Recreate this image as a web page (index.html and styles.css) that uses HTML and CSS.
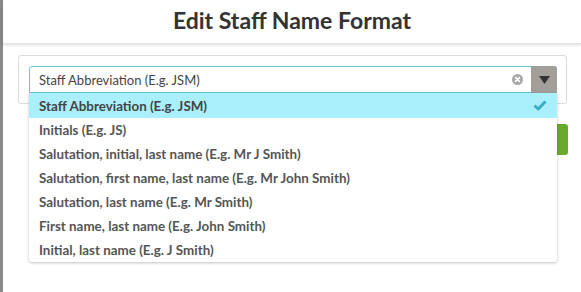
FILE: index.html
```html
<!DOCTYPE html>
<html lang="en">
<head>
  <meta charset="UTF-8" />
  <title>Edit Staff Name Format</title>
  <link rel="stylesheet" href="styles.css">
</head>
<body>
  <div class="backdrop"></div>
  <div class="modal">
    <div class="modal-header">
      <h1>Edit Staff Name Format</h1>
    </div>

    <div class="modal-body">
      <div class="panel">
        <div class="select">
          <div class="select-value">Staff Abbreviation (E.g. JSM)</div>
          <span class="clear">
            <svg width="11" height="11" viewBox="0 0 11 11">
              <circle cx="5.5" cy="5.5" r="5.5" fill="#a8a8a8" />
              <path d="M3.6 3.6 L7.4 7.4 M7.4 3.6 L3.6 7.4" stroke="#fff" stroke-width="1.6" stroke-linecap="round" />
            </svg>
          </span>
          <span class="arrow">
            <svg width="11" height="8" viewBox="0 0 11 8">
              <path d="M0 0 H11 L5.5 8 Z" fill="#333" />
            </svg>
          </span>

          <ul class="dropdown">
            <li class="selected">
              Staff Abbreviation (E.g. JSM)
              <svg class="check" width="14" height="11" viewBox="0 0 14 11">
                <path d="M1.5 5.5 L5.2 9 L12.5 1.5" fill="none" stroke="#3aaec6" stroke-width="3" stroke-linejoin="round" />
              </svg>
            </li>
            <li>Initials (E.g. JS)</li>
            <li>Salutation, initial, last name (E.g. Mr J Smith)</li>
            <li>Salutation, first name, last name (E.g. Mr John Smith)</li>
            <li>Salutation, last name (E.g. Mr Smith)</li>
            <li>First name, last name (E.g. John Smith)</li>
            <li>Initial, last name (E.g. J Smith)</li>
          </ul>
        </div>
      </div>

      <div class="actions">
        <button class="btn-save">Save</button>
      </div>
    </div>
  </div>
</body>
</html>
```

FILE: styles.css
```css
* {
  box-sizing: border-box;
}

body {
  margin: 0;
  display: flex;
  min-height: 292px;
  background: #fff;
  font-family: Lato, "Open Sans", sans-serif;
  color: #444;
}

.backdrop {
  width: 3px;
  background: #8c8a88;
}

.modal {
  flex: 1;
  background: #fff;
}

.modal-header {
  height: 44px;
  box-shadow: 0 1px 3px rgba(0, 0, 0, 0.15);
  border-bottom: 1px solid #e4e4e4;
  text-align: center;
}

h1 {
  margin: 0;
  padding-top: 6px;
  font-size: 23px;
  font-weight: 700;
  color: #333;
}

.modal-body {
  padding: 11px 14px 0 15px;
}

.panel {
  height: 49px;
  border: 1px solid #dcdcdc;
  border-radius: 3px;
  padding: 10px 9px 0 10px;
}

.select {
  position: relative;
  display: flex;
  align-items: center;
  height: 27px;
  border: 1px solid #66c6d6;
  border-radius: 3px 3px 0 0;
}

.select-value {
  flex: 1;
  padding-left: 9px;
  font-size: 13px;
  color: #444;
}

.clear {
  display: flex;
  margin-right: 8px;
}

.arrow {
  display: flex;
  align-items: center;
  justify-content: center;
  width: 26px;
  height: 27px;
  margin: -1px -1px -1px 0;
  background: #a29e9a;
  border-radius: 0 3px 0 0;
}

.dropdown {
  position: absolute;
  top: 26px;
  left: -1px;
  right: -1px;
  margin: 0;
  padding: 0;
  list-style: none;
  background: #fff;
  border-radius: 0 0 3px 3px;
  box-shadow: 0 1px 3px rgba(0, 0, 0, 0.25);
  z-index: 2;
}

.dropdown li {
  display: flex;
  align-items: center;
  justify-content: space-between;
  height: 24px;
  padding: 0 10px;
  font-size: 13.4px;
  font-weight: 700;
  color: #555;
}

.dropdown li.selected {
  height: 25px;
  background: #aaf0fc;
  color: #444;
}

.check {
  margin-right: 0;
}

.actions {
  display: flex;
  justify-content: flex-end;
  margin-top: 20px;
}

.btn-save {
  height: 31px;
  padding: 0 14px;
  margin-right: -1px;
  border: none;
  border-radius: 3px;
  background: #6aaa2a;
  color: #fff;
  font-family: inherit;
  font-size: 14px;
  font-weight: 700;
}
```
